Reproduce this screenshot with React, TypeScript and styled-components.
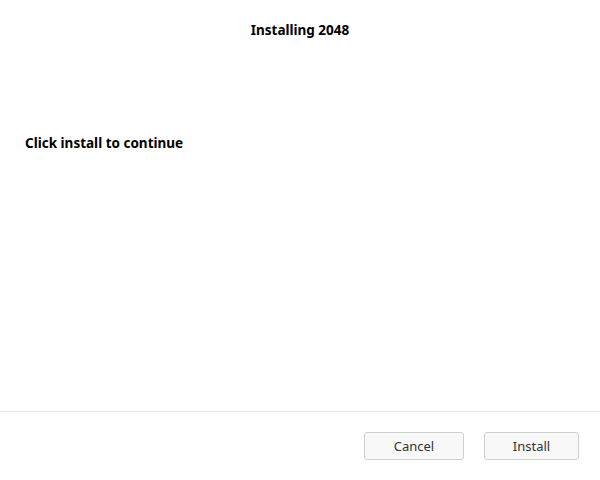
import React from "react";
import styled, { createGlobalStyle } from "styled-components";

const Global = createGlobalStyle`
  *, *::before, *::after { box-sizing: border-box; }
  html, body { margin: 0; padding: 0; background: #fff; }
  body { font-family: "Noto Sans", "Open Sans", sans-serif; }
`;

const Window = styled.div`
  width: 600px;
  height: 480px;
  display: flex;
  flex-direction: column;
  background: #fff;
`;

const Title = styled.div`
  height: 60px;
  display: flex;
  align-items: center;
  justify-content: center;
  font-size: 13.5px;
  font-weight: 700;
  color: #000;
`;

const Body = styled.div`
  flex: 1;
  padding: 74px 25px 0;
`;

const Message = styled.div`
  font-size: 13.5px;
  font-weight: 700;
  color: #000;
`;

const Footer = styled.div`
  height: 69px;
  border-top: 1px solid #e2e2e2;
  display: flex;
  justify-content: flex-end;
  align-items: flex-start;
  gap: 20px;
  padding: 20px 21px 0 0;
`;

const Button = styled.button<{ $w: number }>`
  width: ${(p) => p.$w}px;
  height: 28px;
  border: 1px solid #cfcfcf;
  border-radius: 3px;
  background: #f8f8f8;
  font-family: "Noto Sans", "Open Sans", sans-serif;
  font-size: 13px;
  color: #333;
  padding: 0;
`;

export default function App() {
  return (
    <Window>
      <Global />
      <Title>Installing 2048</Title>
      <Body>
        <Message>Click install to continue</Message>
      </Body>
      <Footer>
        <Button $w={100}>Cancel</Button>
        <Button $w={95}>Install</Button>
      </Footer>
    </Window>
  );
}
